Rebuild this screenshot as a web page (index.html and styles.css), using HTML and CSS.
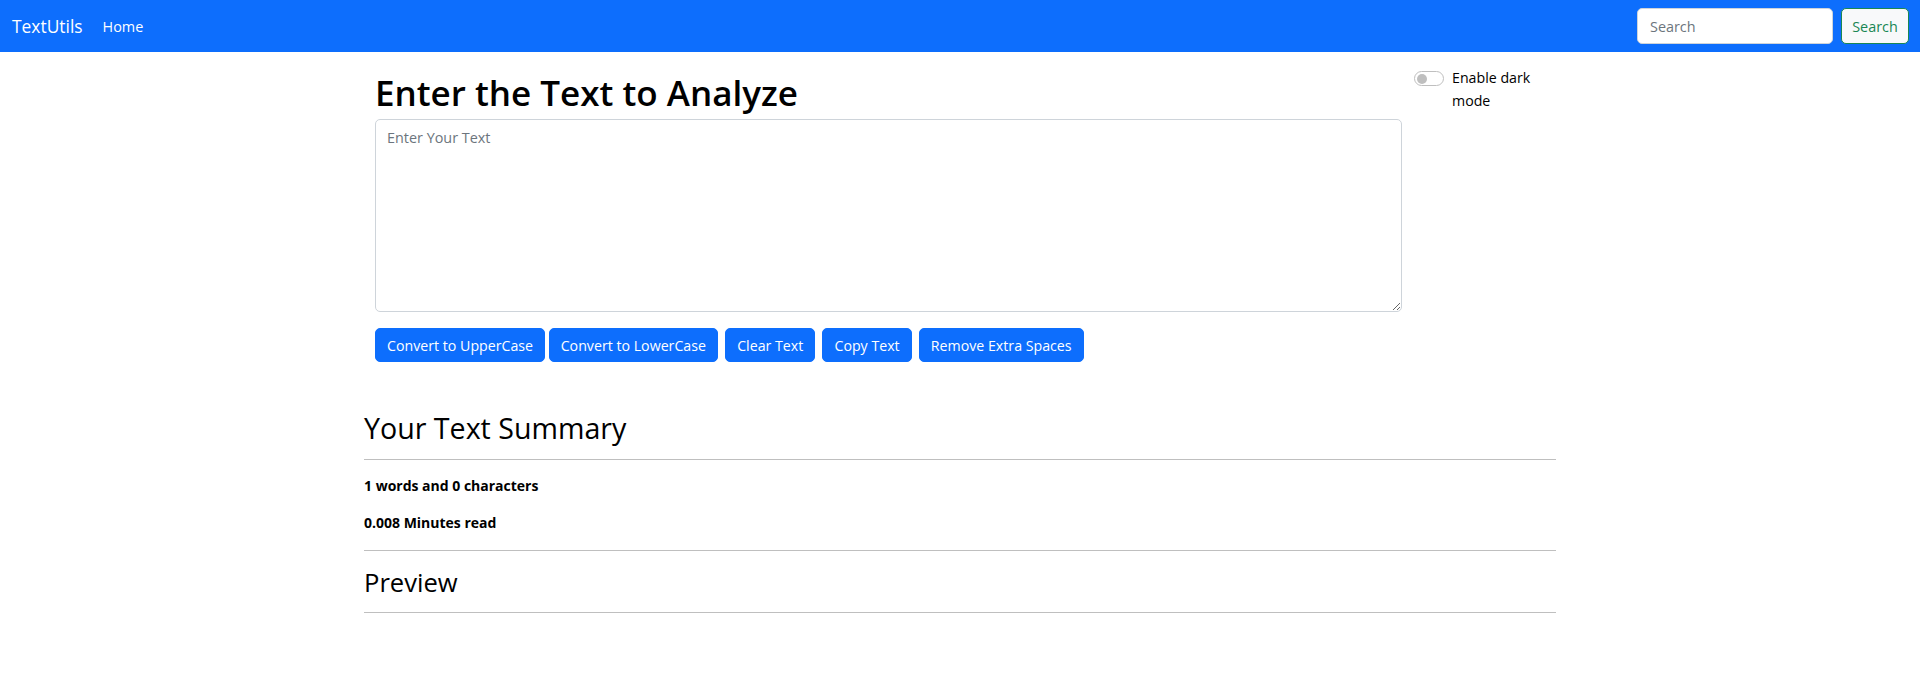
FILE: index.html
```html
<!DOCTYPE html>
<html lang="en">
<head>
<meta charset="utf-8">
<title>TextUtils</title>
<link rel="stylesheet" href="styles.css">
</head>
<body>
<nav class="navbar">
  <a class="brand" href="#">TextUtils</a>
  <a class="nav-link" href="#">Home</a>
  <form class="search">
    <input class="search-input" type="search" placeholder="Search">
    <button class="search-btn" type="button">Search</button>
  </form>
</nav>
<main class="page">
  <section class="top">
    <div class="editor">
      <h1 class="title">Enter the Text to Analyze</h1>
      <textarea class="text-box" placeholder="Enter Your Text"></textarea>
      <div class="actions">
        <button class="btn" type="button">Convert to UpperCase</button>
        <button class="btn" type="button">Convert to LowerCase</button>
        <button class="btn" type="button">Clear Text</button>
        <button class="btn" type="button">Copy Text</button>
        <button class="btn" type="button">Remove Extra Spaces</button>
      </div>
    </div>
    <div class="switch">
      <span class="toggle"><span class="knob"></span></span>
      <label class="switch-label">Enable dark mode</label>
    </div>
  </section>
  <section class="summary">
    <h2 class="summary-title">Your Text Summary</h2>
    <hr class="rule rule-first">
    <p class="stat stat-first">1 words and 0 characters</p>
    <p class="stat">0.008 Minutes read</p>
    <hr class="rule rule-second">
    <h3 class="preview-title">Preview</h3>
    <hr class="rule rule-third">
  </section>
</main>
</body>
</html>
```

FILE: styles.css
```css
* { box-sizing: border-box; }
body {
  margin: 0;
  font-family: "Open Sans", "Noto Sans", sans-serif;
  color: #000;
  background: #fff;
}
.navbar {
  background: #0d6efd;
  height: 52px;
  display: flex;
  align-items: center;
  padding: 0 11px 0 12px;
}
.brand {
  color: #fff;
  text-decoration: none;
  font-size: 17.4px;
  margin-right: 12px;
}
.nav-link {
  color: #fff;
  text-decoration: none;
  font-size: 14.4px;
  padding: 0 8px;
}
.search {
  margin-left: auto;
  display: flex;
  align-items: center;
}
.search-input {
  width: 196px;
  height: 36px;
  border: 1px solid #ced4da;
  border-radius: 5px;
  padding: 0 12px;
  font-family: inherit;
  font-size: 14.4px;
  color: #212529;
  background: #fff;
}
.search-input::placeholder { color: #6c757d; }
.search-btn {
  margin-left: 8px;
  width: 68px;
  height: 36px;
  border: 1px solid #198754;
  border-radius: 5px;
  background: #f8f9fa;
  color: #198754;
  font-family: inherit;
  font-size: 14.4px;
  padding: 0;
}
.page {
  width: 1192px;
  margin: 0 auto;
}
.top {
  display: flex;
  padding: 14px 0 0 11px;
}
.editor {
  width: 1027px;
  display: flex;
  flex-direction: column;
  align-items: flex-start;
}
.title {
  margin: 7px 0 6px;
  font-size: 35px;
  line-height: 40px;
  font-weight: 600;
}
.text-box {
  width: 100%;
  height: 193px;
  border: 1px solid #ced4da;
  border-radius: 5px;
  padding: 7px 11px 5px;
  font-family: inherit;
  font-size: 14.4px;
  line-height: 21.6px;
  resize: vertical;
}
.text-box::placeholder { color: #6c757d; }
.actions {
  margin-top: 16px;
  display: flex;
}
.btn {
  height: 34px;
  padding: 0 11px;
  border: 1px solid #0d6efd;
  border-radius: 5px;
  background: #0d6efd;
  color: #fff;
  font-family: inherit;
  font-size: 14.2px;
  margin: 0 3.6px;
}
.btn:first-child { margin: 0; }
.switch {
  margin-left: 12px;
  display: flex;
  align-items: flex-start;
  padding-top: 1px;
}
.toggle {
  width: 30px;
  height: 15px;
  margin-top: 4px;
  border: 1px solid #bfbfbf;
  border-radius: 8px;
  display: flex;
  align-items: center;
  padding-left: 2px;
}
.knob {
  width: 10px;
  height: 10px;
  border-radius: 50%;
  background: #bfbfbf;
}
.switch-label {
  margin-left: 8px;
  width: 92px;
  font-size: 14.2px;
  line-height: 22.5px;
  color: #000;
}
.summary {
  margin-top: 47px;
}
.summary-title {
  margin: 0;
  font-size: 28.6px;
  line-height: 38px;
  font-weight: 500;
}
.rule {
  border: 0;
  border-top: 1px solid #bfbfbf;
  margin: 0;
}
.rule-first { margin-top: 12px; }
.stat {
  margin: 15px 0 0;
  font-size: 14px;
  line-height: 21.6px;
  font-weight: 700;
}
.stat-first { margin-top: 15px; }
.rule-second { margin-top: 17px; }
.preview-title {
  margin: 15px 0 0;
  font-size: 25.6px;
  line-height: 34px;
  font-weight: 500;
}
.rule-third { margin-top: 12px; }
```
